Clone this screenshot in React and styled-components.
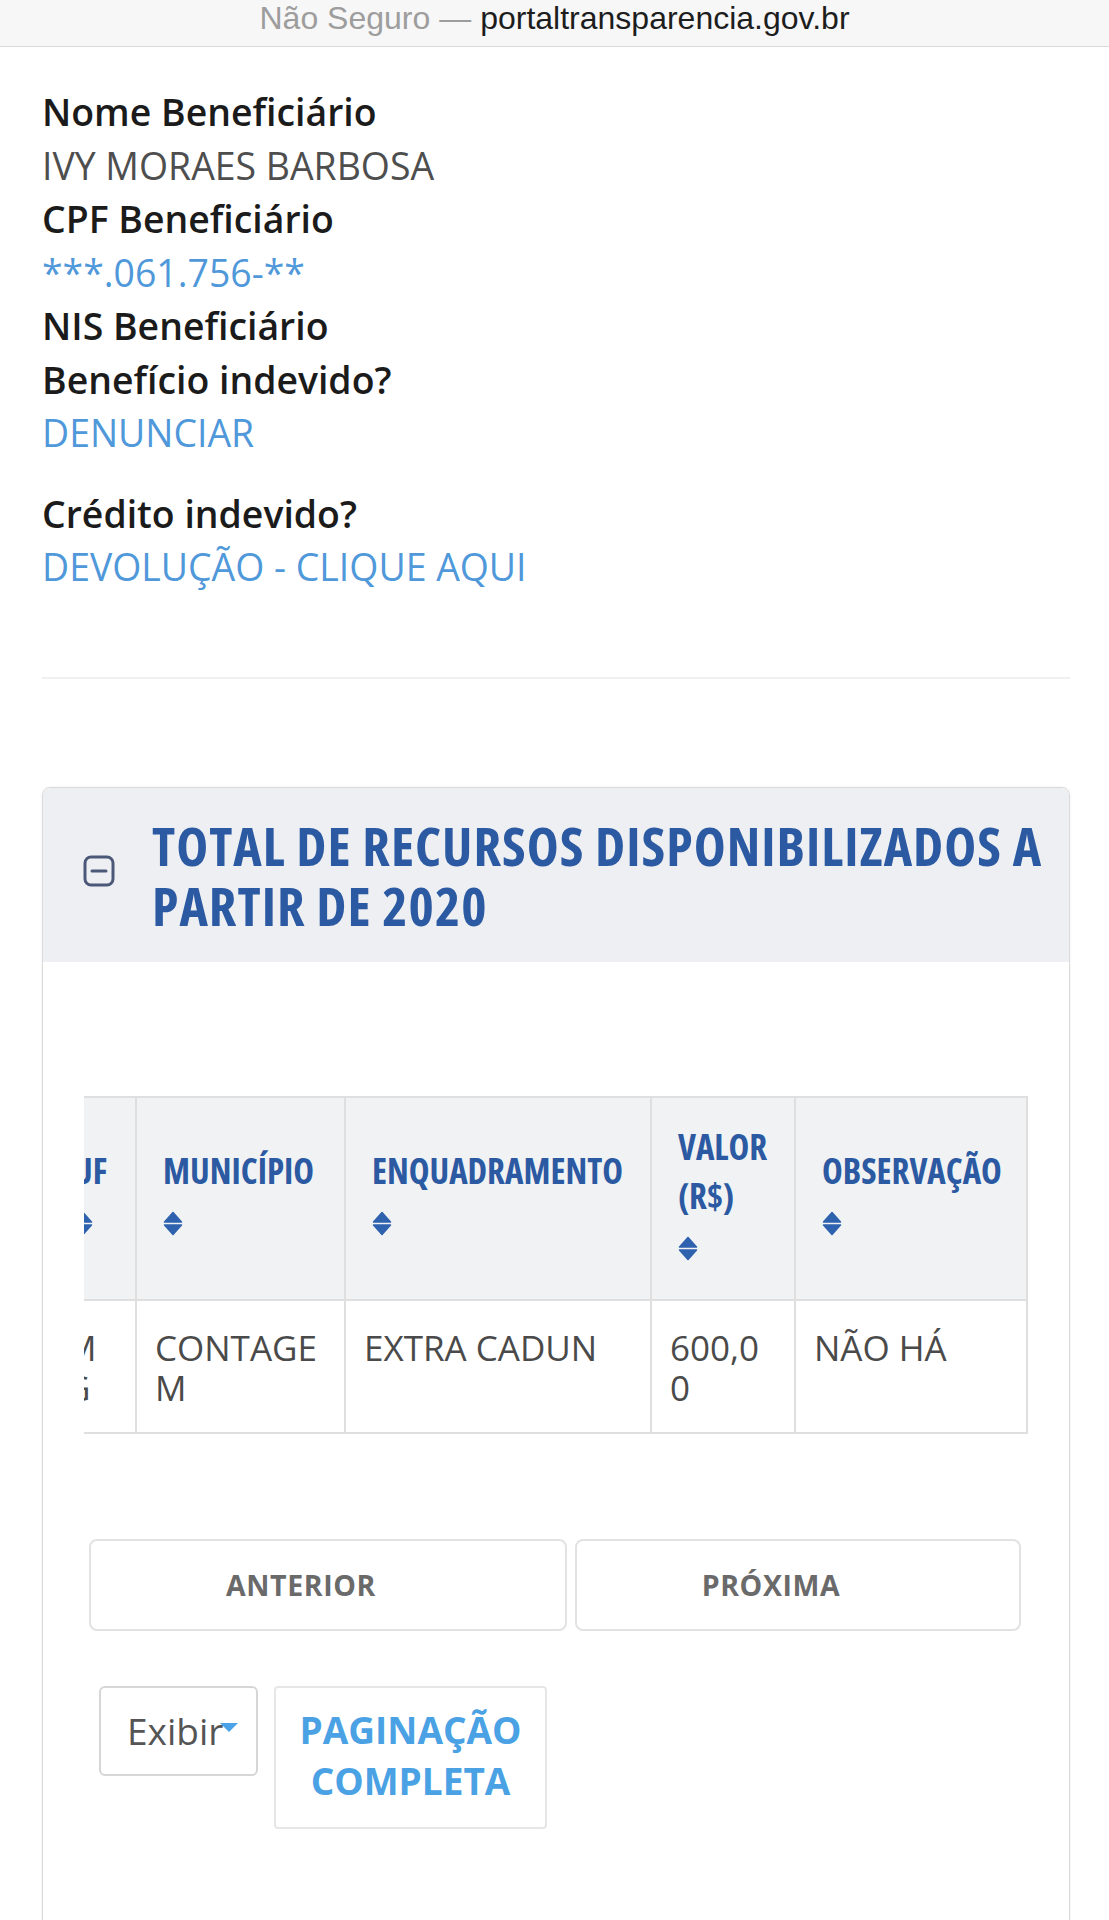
import React, { useLayoutEffect, useRef } from 'react';
import styled, { createGlobalStyle } from 'styled-components';

const GlobalStyle = createGlobalStyle`
  body {
    margin: 0;
    background: #ffffff;
    font-family: 'Open Sans', 'Liberation Sans', sans-serif;
  }
`;

const PageContainer = styled.div`
  width: 1109px;
  min-height: 1920px;
  overflow: hidden;
`;

const TopBar = styled.div`
  height: 47px;
  box-sizing: border-box;
  display: flex;
  justify-content: center;
  padding-top: 0;
  background: #f7f7f7;
  border-bottom: 1px solid #dadada;
  font-family: 'Liberation Sans', Arial, sans-serif;
  font-size: 32px;
  line-height: 36px;
`;

const Insecure = styled.span`
  color: #9d9d9d;
  margin-right: 9px;
`;

const Domain = styled.span`
  color: #1d1d1d;
`;

const Content = styled.div`
  padding: 38px 39px 0 42px;
`;

const InfoBlock = styled.div`
  display: flex;
  flex-direction: column;
  font-size: 37.4px;
  line-height: 53.5px;
  margin-top: ${(p) => (p.$spaced ? '27px' : '0')};
`;

const Label = styled.div`
  font-weight: 600;
  color: #1b1b1b;
`;

const Value = styled.div`
  color: #4e4e4e;
`;

const InfoLink = styled.a`
  color: #4f98da;
  text-decoration: none;
`;

const Divider = styled.hr`
  border: none;
  border-top: 2px solid #f0f0f0;
  margin: 83px 0 0 0;
`;

const Card = styled.section`
  margin-top: 108px;
  border: 1px solid #d9d9d9;
  border-radius: 8px;
  box-shadow: 0 0 3px rgba(0, 0, 0, 0.06);
  overflow: hidden;
`;

const CardHeader = styled.div`
  display: flex;
  align-items: center;
  gap: 37px;
  padding: 27px 18px 27px 40px;
  background: #edeff2;
`;

const ToggleIcon = styled.span`
  display: flex;
  flex-shrink: 0;
  margin-bottom: 7px;
`;

const CardTitle = styled.h2`
  margin: 0;
  font-size: 54px;
  line-height: 60px;
  font-weight: 700;
  font-stretch: 75%;
  letter-spacing: 1px;
  color: #2c5aa2;
`;

const CardBody = styled.div`
  padding: 134px 41px 140px 41px;
  background: #ffffff;
`;

const TableScroll = styled.div`
  overflow: hidden;
`;

const Table = styled.table`
  border-collapse: collapse;
  table-layout: fixed;
  width: 1411px;
`;

const Th = styled.th`
  background: #f1f2f4;
  border: 2px solid #dfdfdf;
  padding: 24px 26px 26px 26px;
  text-align: left;
  vertical-align: middle;
  font-size: 35px;
  line-height: 49px;
  font-weight: 700;
  font-stretch: 75%;
  color: #2c5aa2;
`;

const Td = styled.td`
  border: 2px solid #dfdfdf;
  padding: 27px 18px 24px 18px;
  vertical-align: top;
  font-size: 35px;
  line-height: 40px;
  color: #4a4a4a;
  word-break: break-all;
`;

const SortWrap = styled.span`
  height: 49px;
  margin-top: 4px;
  display: flex;
  align-items: center;
`;

const Pager = styled.div`
  display: grid;
  grid-template-columns: 478px 446px;
  gap: 8px;
  margin: 105px 6px 0 5px;
`;

const PagerButton = styled.button`
  height: 92px;
  padding: 0 54px 0 0;
  background: #ffffff;
  border: 2px solid #e2e2e2;
  border-radius: 8px;
  font-family: 'Open Sans', sans-serif;
  font-size: 28.5px;
  font-weight: 700;
  letter-spacing: 0.6px;
  color: #6a6a6a;
`;

const Tools = styled.div`
  display: flex;
  align-items: flex-start;
  gap: 16px;
  margin: 55px 0 0 15px;
`;

const SelectBox = styled.div`
  width: 159px;
  height: 90px;
  box-sizing: border-box;
  display: flex;
  align-items: center;
  padding-left: 26px;
  border: 2px solid #d6d6d6;
  border-radius: 6px;
  font-size: 37px;
  color: #555555;
`;

const FullPageButton = styled.button`
  width: 273px;
  height: 143px;
  padding: 0 0 4px 0;
  background: #ffffff;
  border: 2px solid #e6e6e6;
  border-radius: 4px;
  font-family: 'Open Sans', sans-serif;
  font-size: 37px;
  line-height: 51px;
  font-weight: 700;
  color: #4aa2e4;
`;

const MinusSquare = () => (
  <svg width="32" height="32" viewBox="0 0 32 32">
    <rect x="2" y="2" width="28" height="28" rx="6" fill="none" stroke="#4b5878" strokeWidth="3" />
    <line x1="9" y1="16" x2="23" y2="16" stroke="#4b5878" strokeWidth="3" strokeLinecap="round" />
  </svg>
);

const SortIcon = () => (
  <svg width="20" height="25" viewBox="0 0 20 25">
    <path d="M1.5 11 L10 1.5 L18.5 11 Z" fill="#2f62ae" strokeLinejoin="round" stroke="#2f62ae" strokeWidth="1.5" />
    <path d="M1.5 14 L18.5 14 L10 23.5 Z" fill="#2f62ae" strokeLinejoin="round" stroke="#2f62ae" strokeWidth="1.5" />
  </svg>
);

const Caret = () => (
  <svg width="18" height="11" viewBox="0 0 18 11" style={{ marginLeft: '-3px', marginTop: '-6px' }}>
    <path d="M0 1 L18 1 L9 10 Z" fill="#4aa3e8" />
  </svg>
);

const columns = [
  { title: 'MÊS DISPONIBILIZAÇÃO', width: 260 },
  { title: 'PARCELA', width: 170 },
  { title: 'UF', width: 90 },
  { title: 'MUNICÍPIO', width: 209 },
  { title: 'ENQUADRAMENTO', width: 306 },
  { title: 'VALOR (R$)', width: 144 },
  { title: 'OBSERVAÇÃO', width: 232 },
];

const row = ['04/2020', '1ª', 'MG', 'CONTAGEM', 'EXTRA CADUN', '600,00', 'NÃO HÁ'];

export default function App() {
  const scrollRef = useRef(null);

  // a tabela aparece rolada ate o fim, como no print
  useLayoutEffect(() => {
    const el = scrollRef.current;
    if (el) el.scrollLeft = el.scrollWidth;
  }, []);

  return (
    <PageContainer>
      <GlobalStyle />
      <TopBar>
        <Insecure>Não Seguro —</Insecure>
        <Domain>portaltransparencia.gov.br</Domain>
      </TopBar>

      <Content>
        <InfoBlock>
          <Label>Nome Beneficiário</Label>
          <Value>IVY MORAES BARBOSA</Value>
          <Label>CPF Beneficiário</Label>
          <InfoLink>***.061.756-**</InfoLink>
          <Label>NIS Beneficiário</Label>
          <Label>Benefício indevido?</Label>
          <InfoLink href="#">DENUNCIAR</InfoLink>
        </InfoBlock>
        <InfoBlock $spaced>
          <Label>Crédito indevido?</Label>
          <InfoLink href="#">DEVOLUÇÃO - CLIQUE AQUI</InfoLink>
        </InfoBlock>

        <Divider />

        <Card>
          <CardHeader>
            <ToggleIcon>
              <MinusSquare />
            </ToggleIcon>
            <CardTitle>TOTAL DE RECURSOS DISPONIBILIZADOS A PARTIR DE 2020</CardTitle>
          </CardHeader>
          <CardBody>
            <TableScroll ref={scrollRef}>
              <Table>
                <colgroup>
                  {columns.map((c) => (
                    <col key={c.title} style={{ width: c.width }} />
                  ))}
                </colgroup>
                <thead>
                  <tr>
                    {columns.map((c) => (
                      <Th key={c.title}>
                        {c.title}
                        <SortWrap>
                          <SortIcon />
                        </SortWrap>
                      </Th>
                    ))}
                  </tr>
                </thead>
                <tbody>
                  <tr>
                    {row.map((v, i) => (
                      <Td key={i}>{v}</Td>
                    ))}
                  </tr>
                </tbody>
              </Table>
            </TableScroll>

            <Pager>
              <PagerButton>ANTERIOR</PagerButton>
              <PagerButton>PRÓXIMA</PagerButton>
            </Pager>

            <Tools>
              <SelectBox>
                Exibir
                <Caret />
              </SelectBox>
              <FullPageButton>
                PAGINAÇÃO
                <br />
                COMPLETA
              </FullPageButton>
            </Tools>
          </CardBody>
        </Card>
      </Content>
    </PageContainer>
  );
}
